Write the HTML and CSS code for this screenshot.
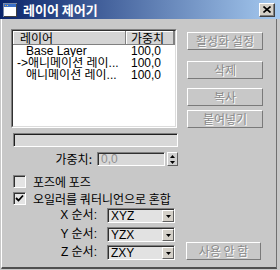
FILE: index.html
```html
<!DOCTYPE html>
<html>
<head>
<meta charset="utf-8">
<link rel="stylesheet" href="styles.css">
</head>
<body>
<div class="win">
  <div class="titlebar">
    <svg class="appicon" width="14" height="14" viewBox="0 0 14 14">
      <rect x="0.5" y="0.5" width="13" height="13" fill="#fff" stroke="#7a8aa8"/>
      <rect x="1" y="1" width="12" height="3" fill="#3a6fc8"/>
      <rect x="2" y="2" width="1" height="1" fill="#f0a030"/>
      <rect x="4" y="2" width="1" height="1" fill="#f0d060"/>
      <rect x="13" y="1" width="1" height="13" fill="#404040"/>
      <rect x="1" y="13" width="13" height="1" fill="#404040"/>
    </svg>
    <span class="title">레이어 제어기</span>
    <div class="close">
      <svg width="8" height="7" viewBox="0 0 8 7"><path d="M0.5 0.5 L7.5 6.5 M7.5 0.5 L0.5 6.5" stroke="#000" stroke-width="1.6" fill="none"/></svg>
    </div>
  </div>
  <div class="frame">
    <div class="panel">
      <div class="left">
        <div class="list">
          <div class="listin">
            <div class="lhead">
              <div class="hc c1">레이어</div>
              <div class="hc c2">가중치</div>
              <div class="hc c3"></div>
            </div>
            <div class="row"><span class="n ind">Base Layer</span><span class="w">100,0</span></div>
            <div class="row"><span class="n cur">-&gt;애니메이션 레이...</span><span class="w">100,0</span></div>
            <div class="row"><span class="n ind">애니메이션 레이...</span><span class="w">100,0</span></div>
          </div>
        </div>
        <div class="slider"></div>
        <div class="weight">
          <span class="lbl">가중치:</span>
          <div class="spinbox">0,0</div>
          <div class="spin">
            <div class="sp"><svg width="5" height="3" viewBox="0 0 5 3"><path d="M2.5 0 L5 3 L0 3 Z" fill="#000"/></svg></div>
            <div class="sp"><svg width="5" height="3" viewBox="0 0 5 3"><path d="M0 0 L5 0 L2.5 3 Z" fill="#000"/></svg></div>
          </div>
        </div>
        <div class="check c-first"><span class="box"></span><span class="ct">포즈에 포즈</span></div>
        <div class="check c-second"><span class="box"><svg width="9" height="9" viewBox="0 0 9 9"><path d="M1 4 L3.5 6.5 L8 1.5" stroke="#000" stroke-width="1.8" fill="none"/></svg></span><span class="ct">오일러를 쿼터니언으로 혼합</span></div>
        <div class="order o1"><span class="olbl">X 순서:</span><div class="combo"><span class="cv">XYZ</span><div class="drop"><svg width="5" height="3" viewBox="0 0 5 3"><path d="M0 0 L5 0 L2.5 3 Z" fill="#000"/></svg></div></div></div>
        <div class="order o2"><span class="olbl">Y 순서:</span><div class="combo"><span class="cv">YZX</span><div class="drop"><svg width="5" height="3" viewBox="0 0 5 3"><path d="M0 0 L5 0 L2.5 3 Z" fill="#000"/></svg></div></div></div>
        <div class="order o3"><span class="olbl">Z 순서:</span><div class="combo"><span class="cv">ZXY</span><div class="drop"><svg width="5" height="3" viewBox="0 0 5 3"><path d="M0 0 L5 0 L2.5 3 Z" fill="#000"/></svg></div></div></div>
      </div>
      <div class="right">
        <div class="btn b1">활성화 설정</div>
        <div class="btn b2">삭제</div>
        <div class="btn b3">복사</div>
        <div class="btn b4">붙여넣기</div>
        <div class="btn b5">사용 안 함</div>
      </div>
    </div>
  </div>
</div>
</body>
</html>
```
FILE: styles.css
```css
* { box-sizing: border-box; margin: 0; padding: 0; }
html, body { width: 280px; height: 270px; overflow: hidden; }
body {
  background: #c8c8c8;
  font-family: "Liberation Sans", "Noto Sans CJK KR", sans-serif;
  font-size: 12px;
  color: #000;
}
.win { width: 280px; height: 270px; display: flex; flex-direction: column; background: #c8c8c8; }
.titlebar {
  height: 19px; flex: none; display: flex; align-items: center;
  background: linear-gradient(to right, #0a246a, #a6caf0);
  padding: 0 5px 0 3px;
}
.appicon { flex: none; display: block; }
.title {
  margin-left: 6px; color: #fff; font-weight: bold; font-size: 13px;
  font-family: "Noto Sans CJK KR", sans-serif; line-height: 19px;
}
.close {
  margin-left: auto; width: 16px; height: 14px; background: #d4d0c8;
  border: 1px solid; border-color: #fff #404040 #404040 #fff;
  box-shadow: inset -1px -1px #808080;
  display: flex; align-items: center; justify-content: center;
}
.close svg { display: block; }
.frame { flex: 1; padding: 0 3px 1px 1px; display: flex; }
.panel {
  flex: 1; display: flex; gap: 9px;
  border-left: 1px solid #fff; border-right: 1px solid #707070; border-bottom: 2px solid #505050;
  padding: 10px 13px 7px 9px;
}
.left { width: 167px; flex: none; display: flex; flex-direction: column; }
.right { width: 76px; flex: none; display: flex; flex-direction: column; }

.list {
  width: 166px; height: 99px;
  border: 1px solid; border-color: #808080 #fff #fff #808080;
}
.listin {
  height: 100%; background: #fff;
  border: 1px solid; border-color: #303030 #dcdcdc #dcdcdc #303030;
}
.lhead { display: flex; height: 14px; }
.hc {
  height: 14px; background: #d4d4d4;
  border-right: 1px solid #808080; border-bottom: 1px solid #808080;
  box-shadow: inset 1px 1px #fff;
  font-family: "Noto Sans CJK KR", sans-serif; line-height: 13px; font-size: 12px;
}
.c1 { width: 113px; padding-left: 7px; }
.c2 { width: 48px; padding-left: 5px; }
.c3 { flex: 1; }
.row { display: flex; height: 12px; line-height: 12px; white-space: nowrap; }
.n { width: 113px; flex: none; overflow: hidden; }
.n.ind { padding-left: 13px; }
.n.cur { padding-left: 4px; }
.w { padding-left: 5px; }

.slider {
  margin: 5px 0 0 2px; width: 165px; height: 14px; background: #d8d8d8;
  border: 1px solid; border-color: #808080 #fff #fff #808080;
  box-shadow: inset 1px 1px #202020;
}
.weight { margin-top: 5px; height: 14px; display: flex; justify-content: flex-end; align-items: center; }
.lbl { font-family: "Noto Sans CJK KR", sans-serif; line-height: 14px; margin-right: 5px; }
.spinbox {
  width: 68px; height: 14px; background: #d8d8d8; color: #909090;
  border: 1px solid; border-color: #808080 #fff #fff #808080;
  box-shadow: inset 1px 1px #303030;
  padding-left: 3px; line-height: 12px; font-size: 12px;
}
.spin {
  margin-left: 2px; width: 11px; height: 14px; display: flex; flex-direction: column;
  border: 1px solid; border-color: #fff #606060 #606060 #fff; background: #d0d0d0;
}
.sp { flex: 1; display: flex; align-items: center; justify-content: center; }
.sp svg { display: block; }

.check { display: flex; align-items: center; height: 13px; }
.c-first { margin-top: 9px; }
.c-second { margin-top: 4px; }
.box {
  width: 13px; height: 13px; margin-left: 2px; background: #e4e4e4; flex: none;
  border: 1px solid; border-color: #808080 #fff #fff #808080;
  box-shadow: inset 1px 1px #303030;
  display: flex; align-items: center; justify-content: center;
}
.box svg { display: block; }
.ct { margin-left: 7px; font-family: "Noto Sans CJK KR", sans-serif; line-height: 13px; white-space: nowrap; }

.order { display: grid; grid-template-columns: 86px 68px; column-gap: 10px; align-items: center; height: 15px; }
.o1 { margin-top: 3px; }
.o2 { margin-top: 4px; }
.o3 { margin-top: 3px; }
.olbl { text-align: right; font-family: "Liberation Sans", "Noto Sans CJK KR", sans-serif; line-height: 15px; white-space: nowrap; }
.combo {
  height: 15px; display: flex; align-items: stretch; background: #e2e2e2;
  border: 1px solid; border-color: #808080 #fff #fff #808080;
  box-shadow: inset 1px 1px #303030;
  padding: 1px 0 0 1px;
}
.cv { flex: 1; padding-left: 2px; line-height: 13px; }
.drop {
  width: 12px; flex: none; background: #d4d0c8;
  border: 1px solid; border-color: #fff #606060 #606060 #fff;
  display: flex; align-items: center; justify-content: center;
}
.drop svg { display: block; }

.btn {
  height: 18px; text-align: center;
  border: 1px solid; border-color: #fff #7a7a7a #7a7a7a #fff;
  font-family: "Noto Sans CJK KR", sans-serif; font-size: 12px; line-height: 16px;
  color: #8a8a8a; text-shadow: 1px 1px #fff; white-space: nowrap;
}
.b1 { margin-top: 3px; }
.b2 { margin-top: 11px; }
.b3 { margin-top: 9px; }
.b4 { margin-top: 4px; }
.b5 { margin-top: auto; margin-left: -1px; width: 75px; }
```
